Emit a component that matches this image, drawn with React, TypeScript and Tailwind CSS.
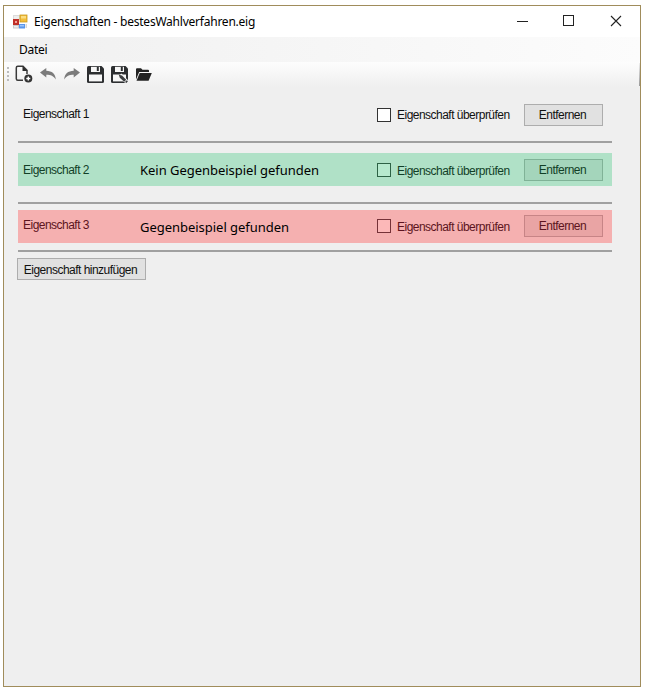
import React from "react";

const small =
  "font-['Liberation_Sans',Arial,sans-serif] text-[12px] leading-[14px] tracking-[-0.52px] whitespace-nowrap";

function AppIcon() {
  return (
    <svg width="16" height="16" viewBox="0 0 16 16" className="shrink-0">
      <rect x="0.5" y="1.5" width="6" height="4" fill="#eeeeee" stroke="#dcdcdc" />
      <rect x="0" y="5" width="6" height="6" fill="#c03028" />
      <rect x="2" y="7" width="2" height="2" fill="#f0a09a" />
      <rect x="7" y="1" width="7" height="7" fill="#f3bd3a" stroke="#c99a1e" strokeWidth="0.8" />
      <rect x="8" y="2" width="5" height="2.5" fill="#fbdd80" />
      <rect x="0.5" y="11.5" width="5" height="2.5" fill="#eeeeee" stroke="#cccccc" />
      <rect x="6" y="10" width="6" height="4.5" fill="#5b96ea" />
      <rect x="7" y="11" width="4" height="1.5" fill="#9cc4fa" />
      <rect x="12.5" y="10" width="1.5" height="4" fill="#d6d6d6" />
    </svg>
  );
}

function NewIcon() {
  return (
    <svg width="18" height="18" viewBox="0 0 18 18" fill="none">
      <path d="M8 15.2H2.8Q1.3 15.2 1.3 13.7V2.8Q1.3 1.3 2.8 1.3H8L12 5.3V9" stroke="#3a3a3a" strokeWidth="1.5" />
      <path d="M7.5 1L12.6 6H7.5Z" fill="#2e2e2e" />
      <circle cx="13.3" cy="13.5" r="4" fill="#333333" />
      <path d="M13.3 11.5V15.5M11.3 13.5H15.3" stroke="#ffffff" strokeWidth="1.4" />
    </svg>
  );
}

function ArrowIcon({ flip = false }: { flip?: boolean }) {
  return (
    <svg width="16" height="12" viewBox="0 0 16 12" className={flip ? "-scale-x-100" : ""}>
      <path d="M0 4.6L6.3 0V2.7C12 3 15.5 5.5 15.8 11.4C13.5 8 11 6.8 6.3 6.8V9.4Z" fill="#7c7c7c" />
    </svg>
  );
}

function SaveIcon({ edit = false }: { edit?: boolean }) {
  return (
    <svg width="17" height="17" viewBox="0 0 17 17">
      <path d="M1.5 0H14.5L17 2.5V15.5Q17 17 15.5 17H1.5Q0 17 0 15.5V1.5Q0 0 1.5 0Z" fill="#2d2f31" />
      <path d="M4 0.8H13V6H4Z" fill="#f7f7f7" />
      <path d="M9.8 0.8H11.8V5H9.8Z" fill="#2d2f31" />
      <path d="M2 8.5H15V15.4H2Z" fill="#f7f7f7" />
      {edit && (
        <g>
          <path d="M9 9L17 17" stroke="#f7f7f7" strokeWidth="4" />
          <path d="M7.8 8.8L11 9.6L15.2 13.7L13.2 15.8L8.8 11.7Z" fill="#3b3d3f" />
          <path d="M15.7 14.3L16.9 15.5L15.4 17L14 15.9Z" fill="#3b3d3f" />
        </g>
      )}
    </svg>
  );
}

function FolderIcon() {
  return (
    <svg width="16" height="13" viewBox="0 0 16 13">
      <path d="M0 11.5V1.3Q0 0.3 1 0.3H5L6.5 1.8H12Q13 1.8 13 2.8V4H3.2Z" fill="#222222" />
      <path d="M3.7 5H15.8L12.6 12.7H0.5Z" fill="#222222" />
    </svg>
  );
}

interface RowProps {
  name: string;
  result?: string;
  tone: string;
  text: string;
  box: string;
  button: string;
  nameClass: string;
  labelClass: string;
}

function PropertyRow({ name, result, tone, text, box, button, nameClass, labelClass }: RowProps) {
  return (
    <div className={`flex h-[33px] w-[594px] items-start ${tone} ${text}`}>
      <span className={`${small} ml-[5px] w-[117px] ${nameClass}`}>{name}</span>
      <span className="mt-[8px] w-[237px] whitespace-nowrap font-['Noto_Sans','Open_Sans',sans-serif] text-[13px] leading-[18px] tracking-[-0.03px] text-black">
        {result}
      </span>
      <span className={`h-[14px] w-[14px] border ${box}`} />
      <span className={`${small} ml-[6px] w-[127px] ${labelClass}`}>Eigenschaft überprüfen</span>
      <button className={`${small} h-[22px] w-[79px] border pr-[2px] ${button}`}>Entfernen</button>
    </div>
  );
}

export default function App() {
  return (
    <div className="h-[691px] w-[645px] overflow-hidden bg-white pt-[5px] pl-[3px]">
      <div className="flex h-[682px] w-[638px] flex-col border border-[#a08c5b] bg-[#efefef] text-black">
        <header className="flex h-[31px] shrink-0 items-center bg-white pl-[9px]">
          <AppIcon />
          <h1 className="ml-[5px] flex-1 whitespace-nowrap font-['Noto_Sans','Open_Sans',sans-serif] text-[12px] leading-[18px] tracking-[-0.23px]">
            Eigenschaften - bestesWahlverfahren.eig
          </h1>
          <svg width="106" height="12" viewBox="0 0 106 12" fill="none" stroke="#222222" className="mr-[17px] mb-px">
            <path d="M0 6.5H11" />
            <rect x="46.5" y="0.5" width="10" height="10" />
            <path d="M94 1L104 11M104 1L94 11" strokeWidth="1.1" />
          </svg>
        </header>
        <nav className="flex h-[25px] shrink-0 items-center bg-linear-to-r from-[#f0f0f0] to-[#fcfcfc] pl-[15px] font-['Noto_Sans','Open_Sans',sans-serif] text-[12px] leading-[18px] tracking-[-0.3px]">
          Datei
        </nav>
        <div className="flex h-[25px] shrink-0 items-center bg-linear-to-b from-[#fdfdfd] to-[#efefef] pb-px pl-[3px]">
          <div className="flex w-[2px] flex-col gap-[2px]">
            <i className="h-[2px] bg-[#bcbcbc]" />
            <i className="h-[2px] bg-[#bcbcbc]" />
            <i className="h-[2px] bg-[#bcbcbc]" />
            <i className="h-[2px] bg-[#bcbcbc]" />
          </div>
          <div className="ml-[6px]"><NewIcon /></div>
          <div className="ml-[7px]"><ArrowIcon /></div>
          <div className="ml-[8px]"><ArrowIcon flip /></div>
          <div className="ml-[7px]"><SaveIcon /></div>
          <div className="ml-[7px]"><SaveIcon edit /></div>
          <div className="ml-[8px]"><FolderIcon /></div>
          <div className="ml-auto h-[23px] w-px bg-linear-to-b from-[#eeeeee] to-[#999999]" />
        </div>
        <main className="flex flex-col items-start pt-[11px] pl-[14px]">
          <PropertyRow
            name="Eigenschaft 1"
            tone=""
            text="text-[#111111]"
            box="mt-[10px] border-[#333333] bg-white"
            button="mt-[6px] border-[#adadad] bg-[#e1e1e1]"
            nameClass="mt-[9px]"
            labelClass="mt-[10px]"
          />
          <div className="mt-[10px] h-[2px] w-[594px] bg-[#a0a0a0]" />
          <div className="mt-[10px]">
            <PropertyRow
              name="Eigenschaft 2"
              result="Kein Gegenbeispiel gefunden"
              tone="bg-[#b0e1c7]"
              text="text-[#123f27]"
              box="mt-[10px] border-[#2d6145] bg-[#b7e9ce]"
              button="mt-[6px] border-[#80b297] bg-[#a4d5bb]"
              nameClass="mt-[10px]"
              labelClass="mt-[11px]"
            />
          </div>
          <div className="mt-[16px] h-[2px] w-[594px] bg-[#a0a0a0]" />
          <div className="mt-[6px]">
            <PropertyRow
              name="Eigenschaft 3"
              result="Gegenbeispiel gefunden"
              tone="bg-[#f5b0b0]"
              text="text-[#5c1420]"
              box="mt-[9px] border-[#753238] bg-[#fcb8b8]"
              button="mt-[5px] border-[#c78486] bg-[#e9a4a4]"
              nameClass="mt-[8px]"
              labelClass="mt-[10px]"
            />
          </div>
          <div className="mt-[7px] h-[2px] w-[594px] bg-[#a0a0a0]" />
          <button className={`${small} mt-[6px] -ml-px h-[22px] w-[129px] border border-[#adadad] bg-[#e1e1e1] pt-px pr-[2px] text-[#111111]`}>
            Eigenschaft hinzufügen
          </button>
        </main>
      </div>
    </div>
  );
}
